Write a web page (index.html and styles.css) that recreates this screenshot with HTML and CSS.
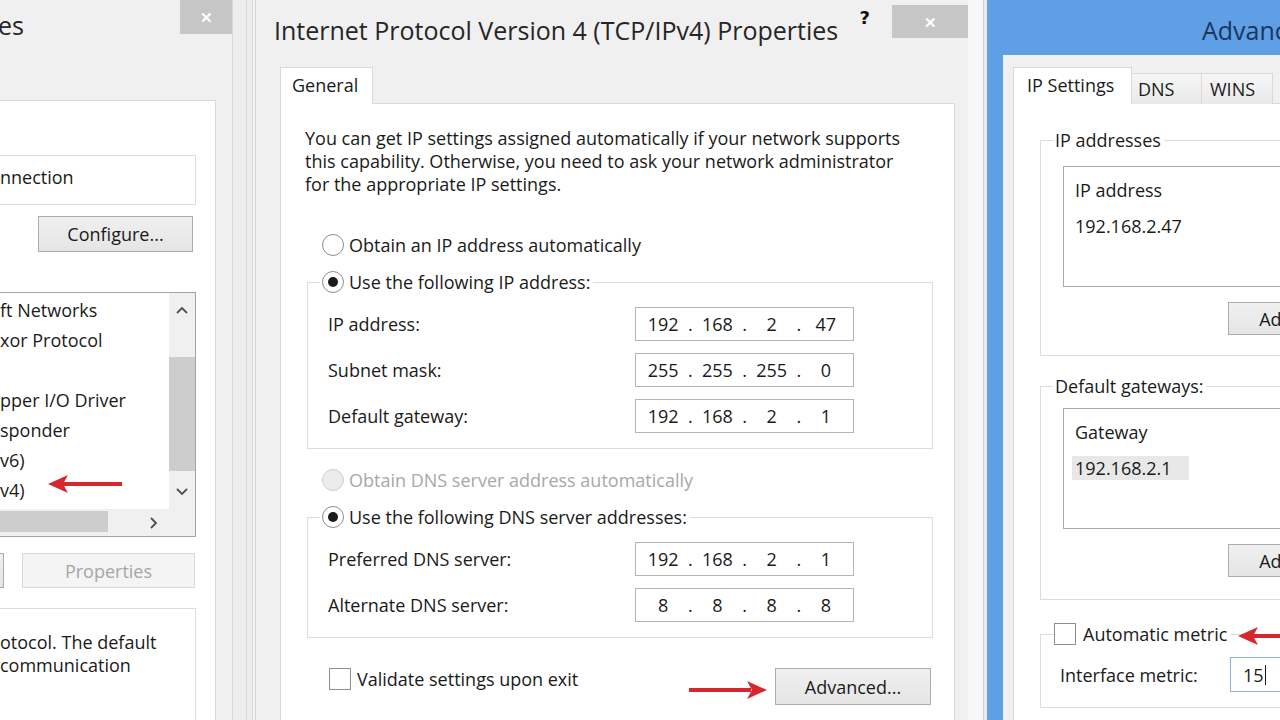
FILE: index.html
```html
<!DOCTYPE html>
<html lang="en">
<head>
  <meta charset="UTF-8">
  <title>Internet Protocol Version 4 (TCP/IPv4) Properties</title>
  <link rel="stylesheet" href="styles.css">
</head>
<body>
  <div class="desk">

    <!-- Ethernet Properties (cut off on the left) -->
    <section class="win win-left">
      <header class="titlebar">
        <span class="title">es</span>
        <span class="close">&#x2715;</span>
      </header>
      <div class="tabs"></div>
      <div class="panel">
        <div class="adapter">nnection</div>
        <button class="btn configure">Configure...</button>
        <div class="listbox">
          <ul class="items">
            <li>ft Networks</li>
            <li>xor Protocol</li>
            <li>&nbsp;</li>
            <li>pper I/O Driver</li>
            <li>sponder</li>
            <li>v6)</li>
            <li>v4)</li>
          </ul>
          <div class="vscroll">
            <span class="arrow-btn">
              <svg width="12" height="8" viewBox="0 0 12 8"><polyline points="1,7 6,2 11,7" fill="none" stroke="#505050" stroke-width="1.8"/></svg>
            </span>
            <span class="track"><span class="thumb"></span></span>
            <span class="arrow-btn">
              <svg width="12" height="8" viewBox="0 0 12 8"><polyline points="1,1 6,6 11,1" fill="none" stroke="#505050" stroke-width="1.8"/></svg>
            </span>
          </div>
          <div class="hscroll">
            <span class="thumb"></span>
            <span class="arrow-btn">
              <svg width="8" height="12" viewBox="0 0 8 12"><polyline points="1,1 6,6 1,11" fill="none" stroke="#505050" stroke-width="1.8"/></svg>
            </span>
          </div>
          <div class="corner"></div>
        </div>
        <div class="btn-row">
          <span class="btn stub"></span>
          <button class="btn disabled">Properties</button>
        </div>
        <div class="desc">
          otocol. The default<br>
          communication
        </div>
      </div>
      <svg class="red-arrow arrow-left" width="78" height="20" viewBox="0 0 78 20">
        <line x1="16" y1="10" x2="76" y2="10" stroke="#d7262c" stroke-width="4"/>
        <polygon points="2,10 22,1 17,10 22,19" fill="#d7262c"/>
      </svg>
    </section>

    <div class="seam seam-a"></div>

    <!-- Internet Protocol Version 4 (TCP/IPv4) Properties -->
    <section class="win win-mid">
      <header class="titlebar">
        <span class="title">Internet Protocol Version 4 (TCP/IPv4) Properties</span>
        <span class="help">?</span>
        <span class="close">&#x2715;</span>
      </header>
      <div class="tabs">
        <span class="tab active">General</span>
      </div>
      <div class="panel">
        <p class="intro">
          You can get IP settings assigned automatically if your network supports<br>
          this capability. Otherwise, you need to ask your network administrator<br>
          for the appropriate IP settings.
        </p>

        <div class="opt first"><span class="radio"></span>Obtain an IP address automatically</div>
        <fieldset class="group">
          <legend class="opt"><span class="radio on"></span>Use the following IP address:</legend>
          <div class="field">
            <label>IP address:</label>
            <div class="ip"><span>192</span><i>.</i><span>168</span><i>.</i><span>2</span><i>.</i><span>47</span></div>
          </div>
          <div class="field">
            <label>Subnet mask:</label>
            <div class="ip"><span>255</span><i>.</i><span>255</span><i>.</i><span>255</span><i>.</i><span>0</span></div>
          </div>
          <div class="field">
            <label>Default gateway:</label>
            <div class="ip"><span>192</span><i>.</i><span>168</span><i>.</i><span>2</span><i>.</i><span>1</span></div>
          </div>
        </fieldset>

        <div class="opt dns-auto"><span class="radio off"></span>Obtain DNS server address automatically</div>
        <fieldset class="group">
          <legend class="opt"><span class="radio on"></span>Use the following DNS server addresses:</legend>
          <div class="field">
            <label>Preferred DNS server:</label>
            <div class="ip"><span>192</span><i>.</i><span>168</span><i>.</i><span>2</span><i>.</i><span>1</span></div>
          </div>
          <div class="field">
            <label>Alternate DNS server:</label>
            <div class="ip"><span>8</span><i>.</i><span>8</span><i>.</i><span>8</span><i>.</i><span>8</span></div>
          </div>
        </fieldset>

        <div class="bottom-row">
          <span class="check"></span>
          <span class="check-label">Validate settings upon exit</span>
          <button class="btn advanced">Advanced...</button>
        </div>
      </div>
      <svg class="red-arrow arrow-mid" width="80" height="20" viewBox="0 0 80 20">
        <line x1="0" y1="10" x2="62" y2="10" stroke="#d7262c" stroke-width="4"/>
        <polygon points="78,10 58,1 63,10 58,19" fill="#d7262c"/>
      </svg>
    </section>

    <div class="seam seam-b"></div>

    <!-- Advanced TCP/IP Settings (cut off on the right) -->
    <section class="win win-right">
      <header class="titlebar">
        <span class="title">Advanced TCP/IP Settings</span>
      </header>
      <div class="body">
        <div class="tabs">
          <span class="tab active">IP Settings</span>
          <span class="tab">DNS</span>
          <span class="tab">WINS</span>
        </div>
        <div class="panel">
          <fieldset class="group">
            <legend>IP addresses</legend>
            <div class="listview">
              <div class="lv-head">IP address</div>
              <div class="lv-row">192.168.2.47</div>
            </div>
            <button class="btn add">Add...</button>
          </fieldset>

          <fieldset class="group gateways">
            <legend>Default gateways:</legend>
            <div class="listview">
              <div class="lv-head">Gateway</div>
              <div class="lv-row"><span class="sel">192.168.2.1</span></div>
            </div>
            <button class="btn add">Add...</button>
          </fieldset>

          <fieldset class="group metric">
            <legend class="opt"><span class="check"></span>Automatic metric</legend>
            <div class="field">
              <label>Interface metric:</label>
              <div class="textbox">15<span class="caret"></span></div>
            </div>
          </fieldset>
        </div>
      </div>
      <svg class="red-arrow arrow-right" width="60" height="20" viewBox="0 0 60 20">
        <line x1="16" y1="10" x2="60" y2="10" stroke="#d7262c" stroke-width="4"/>
        <polygon points="2,10 22,1 17,10 22,19" fill="#d7262c"/>
      </svg>
    </section>

  </div>
</body>
</html>
```

FILE: styles.css
```css
* {
  box-sizing: border-box;
}
body {
  margin: 0;
  width: 1280px;
  height: 720px;
  overflow: hidden;
  font-family: "Open Sans", "Segoe UI", Arial, sans-serif;
  font-size: 18px;
  color: #1a1a1a;
  background: #ececec;
}
.desk {
  display: flex;
  height: 720px;
}

/* windows */
.win {
  position: relative;
  flex: none;
  display: flex;
  flex-direction: column;
  height: 720px;
  background: #f0f0f0;
}
.titlebar {
  flex: none;
  display: flex;
  align-items: flex-start;
  height: 55px;
}
.title {
  font-size: 25px;
  line-height: 32px;
  color: #262626;
  white-space: nowrap;
}
.close {
  display: flex;
  align-items: center;
  justify-content: center;
  margin-left: auto;
  background: #c6c6c6;
  color: #fff;
  font-size: 15px;
  font-weight: bold;
}
.tabs {
  flex: none;
  display: flex;
  align-items: flex-end;
  height: 48px;
}
.tab {
  position: relative;
  z-index: 1;
  height: 31px;
  margin-bottom: -1px;
  border: 1px solid #d9d9d9;
  border-bottom: 0;
  background: linear-gradient(#f6f6f6, #e9e9e9);
  line-height: 30px;
  white-space: nowrap;
}
.tab.active {
  height: 37px;
  background: #fff;
  line-height: 34px;
}
.panel {
  flex: 1;
  background: #fff;
  border: 1px solid #d9d9d9;
  border-bottom: 0;
  white-space: nowrap;
}

.seam {
  flex: none;
  height: 720px;
}
.seam-a {
  width: 22px;
  background: linear-gradient(90deg, #ededed 0 13px, #d6d6d6 13px 14px, #ededed 14px 19px, #dadada 19px 20px, #f2f2f2 20px);
}
.seam-b {
  width: 19px;
  background: linear-gradient(90deg, #f7f7f7 0 15px, #d0d0d0 15px 16px, #e9e9e9 16px);
}

/* buttons */
.btn {
  display: block;
  padding: 0;
  font: inherit;
  color: #1a1a1a;
  border: 1px solid #acacac;
  background: linear-gradient(#f0f0f0, #e5e5e5);
  text-align: center;
}
.btn.disabled {
  color: #a6a6a6;
  border-color: #d9d9d9;
  background: #f4f4f4;
}

/* radio / checkbox */
.opt {
  display: flex;
  align-items: center;
  gap: 5px;
  height: 26px;
  white-space: nowrap;
}
.radio {
  flex: none;
  position: relative;
  width: 22px;
  height: 22px;
  border: 1px solid #8e8e8e;
  border-radius: 50%;
  background: #fff;
}
.radio.on::after {
  content: "";
  position: absolute;
  left: 5px;
  top: 5px;
  width: 10px;
  height: 10px;
  border-radius: 50%;
  background: #1c1c1c;
}
.radio.off {
  border-color: #cfcfcf;
  background: #ececec;
}
.check {
  flex: none;
  width: 22px;
  height: 22px;
  border: 1px solid #8e8e8e;
  background: #fff;
}

/* group boxes */
.group {
  min-width: 0;
  margin: 0;
  padding: 0;
  border: 1px solid #dcdcdc;
}
.group legend {
  padding: 0 3px 0 0;
}
.field {
  display: flex;
  align-items: center;
  height: 34px;
}
.field label {
  flex: none;
}
.ip {
  display: grid;
  grid-template-columns: 1fr 6px 1fr 6px 1fr 6px 1fr;
  align-items: center;
  width: 219px;
  height: 34px;
  padding: 0 3px;
  border: 1px solid #b5b5b5;
  background: #fff;
}
.ip span {
  text-align: center;
}
.ip i {
  font-style: normal;
  text-align: center;
}

/* left window */
.win-left {
  width: 233px;
  border-right: 1px solid #d6d6d6;
}
.win-left .title {
  margin: 9px 0 0 -2px;
}
.win-left .close {
  width: 52px;
  height: 34px;
}
.win-left .tabs {
  height: 45px;
}
.win-left .panel {
  width: 216px;
  flex: 1;
  border-left: 0;
}
.adapter {
  display: flex;
  align-items: center;
  width: 196px;
  height: 50px;
  margin-top: 54px;
  padding-bottom: 6px;
  border: 1px solid #dcdcdc;
  border-left: 0;
}
.configure {
  width: 155px;
  height: 36px;
  margin: 11px 0 0 38px;
}
.listbox {
  display: grid;
  grid-template-columns: 1fr 26px;
  grid-template-rows: 1fr 27px;
  width: 196px;
  height: 245px;
  margin-top: 40px;
  border: 1px solid #a3a3a3;
  border-left: 0;
}
.items {
  margin: 0;
  padding: 2px 0 0;
  list-style: none;
  overflow: hidden;
}
.items li {
  height: 30px;
  line-height: 30px;
}
.vscroll {
  display: flex;
  flex-direction: column;
  background: #f0f0f0;
}
.vscroll .arrow-btn {
  display: flex;
  align-items: center;
  justify-content: center;
  height: 34px;
}
.vscroll .track {
  flex: 1;
}
.vscroll .thumb {
  display: block;
  height: 114px;
  margin-top: 30px;
  background: #cdcdcd;
}
.hscroll {
  display: flex;
  background: #f0f0f0;
}
.hscroll .thumb {
  width: 108px;
  margin: 2px 0 4px;
  background: #cdcdcd;
}
.hscroll .arrow-btn {
  display: flex;
  align-items: center;
  justify-content: center;
  width: 30px;
  margin-left: auto;
}
.corner {
  background: #f0f0f0;
}
.btn-row {
  display: flex;
  height: 35px;
  margin-top: 16px;
}
.btn.stub {
  width: 4px;
  border-left: 0;
}
.btn-row .disabled {
  width: 173px;
  margin-left: 18px;
}
.desc {
  width: 196px;
  height: 200px;
  margin-top: 20px;
  padding-top: 22px;
  border: 1px solid #dcdcdc;
  border-left: 0;
  line-height: 23px;
}
.red-arrow {
  position: absolute;
}
.arrow-left {
  left: 46px;
  top: 474px;
}

/* middle window */
.win-mid {
  width: 713px;
  border-left: 1px solid #d6d6d6;
}
.win-mid .title {
  margin: 14px 0 0 18px;
}
.help {
  margin: 7px 22px 0 auto;
  font-family: "DejaVu Sans", sans-serif;
  font-size: 18px;
  font-weight: bold;
  color: #111;
}
.win-mid .close {
  width: 76px;
  height: 33px;
  margin: 5px 0 0 0;
}
.win-mid .tabs {
  padding-left: 24px;
}
.win-mid .tab {
  width: 93px;
  padding-left: 11px;
}
.win-mid .panel {
  width: 675px;
  margin-left: 24px;
  padding: 23px 21px 0 24px;
}
.intro {
  margin: 0;
  line-height: 23px;
}
.win-mid .opt {
  padding-left: 17px;
}
.opt.first {
  margin-top: 36px;
}
.win-mid .group {
  margin: 11px 0 0 2px;
  padding-bottom: 15px;
}
.win-mid .group legend {
  margin-left: 12px;
  padding-left: 2px;
}
.win-mid .field {
  margin-top: 12px;
}
.win-mid .field label {
  width: 327px;
  padding-left: 20px;
}
.opt.dns-auto {
  margin-top: 18px;
  color: #a8a8a8;
}
.bottom-row {
  display: flex;
  align-items: flex-start;
  margin-top: 30px;
}
.bottom-row .check {
  margin-left: 24px;
}
.check-label {
  margin-left: 6px;
  line-height: 22px;
}
.advanced {
  width: 156px;
  height: 37px;
  margin: 0 2px 0 auto;
}
.arrow-mid {
  left: 433px;
  top: 680px;
}

/* right window */
.win-right {
  width: 480px;
  padding-left: 16px;
  background: #5f9fe6;
}
.win-right .title {
  margin: 14px 0 0 199px;
  color: #1c355d;
}
.win-right .body {
  flex: 1;
  display: flex;
  flex-direction: column;
  padding-left: 10px;
  background: #f0f0f0;
}
.win-right .tab {
  width: 70px;
  padding-left: 6px;
}
.win-right .tab.active {
  width: 119px;
  padding-left: 13px;
}
.win-right .tab + .tab {
  border-left: 0;
}
.win-right .tab:last-child {
  width: 71px;
  padding-left: 8px;
}
.win-right .panel {
  border-right: 0;
  padding-left: 26px;
}
.win-right .group {
  width: 420px;
  margin-top: 24px;
  padding: 14px 0 20px 22px;
}
.win-right .group legend {
  margin-left: -10px;
  padding: 0 3px 0 2px;
  line-height: 24px;
}
.win-right .gateways {
  margin-top: 18px;
  padding: 10px 0 22px 22px;
}
.listview {
  width: 330px;
  height: 121px;
  padding: 11px 0 0 11px;
  border: 1px solid #a9a9a9;
  background: #fff;
  line-height: 24px;
}
.lv-row {
  margin-top: 12px;
}
.sel {
  display: inline-block;
  width: 117px;
  margin-left: -3px;
  padding-left: 3px;
  background: #e8e8e8;
}
.add {
  width: 110px;
  height: 33px;
  margin: 15px 0 0 165px;
}
.win-right .metric {
  margin-top: 22px;
  padding: 11px 0 15px 0;
}
.win-right .metric legend {
  gap: 7px;
  height: 24px;
  margin-left: 13px;
  padding-left: 0;
}
.win-right .metric .field {
  height: 35px;
}
.win-right .metric label {
  width: 189px;
  padding-left: 19px;
}
.textbox {
  display: flex;
  align-items: center;
  width: 120px;
  height: 35px;
  padding-left: 12px;
  border: 1px solid #8fb2d8;
  background: #fff;
}
.caret {
  width: 1px;
  height: 20px;
  margin-left: 1px;
  background: #111;
}
.arrow-right {
  left: 249px;
  top: 626px;
}
```
